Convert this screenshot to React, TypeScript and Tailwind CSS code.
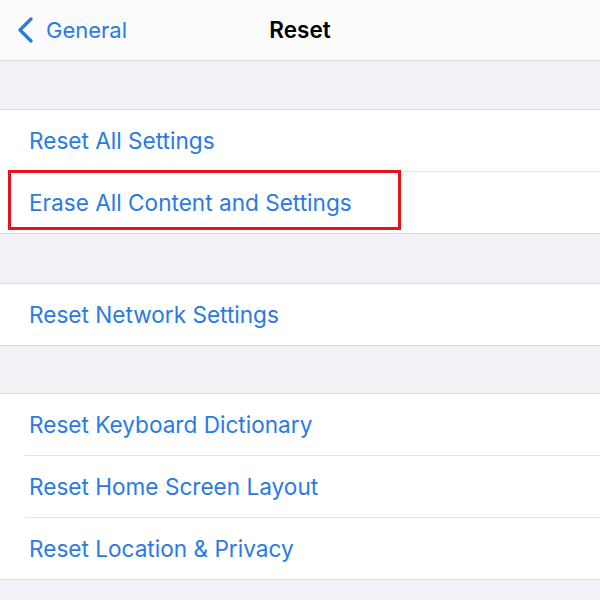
import React from 'react';

const groups: { label: string; highlight?: boolean }[][] = [
  [{ label: 'Reset All Settings' }, { label: 'Erase All Content and Settings', highlight: true }],
  [{ label: 'Reset Network Settings' }],
  [
    { label: 'Reset Keyboard Dictionary' },
    { label: 'Reset Home Screen Layout' },
    { label: 'Reset Location & Privacy' },
  ],
];

const gaps = ['mt-[48px]', 'mt-[49px]', 'mt-[47px]'];

const Row: React.FC<{ label: string; last: boolean; highlight?: boolean }> = ({ label, last, highlight }) => (
  <>
    <div className="relative h-[61px] pl-[29px] pt-[2px] flex items-center">
      <span className="text-[22.6px] text-[#2a7ae2] leading-none">{label}</span>
      {highlight && (
        <div className="absolute left-[8px] top-[-2px] w-[393px] h-[60px] border-[3px] border-[#e5131b]" />
      )}
    </div>
    {!last && <div className="ml-[25px] h-px bg-[#e3e3e6]" />}
  </>
);

export default function App() {
  return (
    <div className="w-[600px] h-[600px] overflow-hidden bg-[#f2f2f6] font-['Inter',sans-serif]">
      <div className="h-[61px] bg-[#fbfbfb] border-b border-[#d9d9dc] flex items-center relative">
        <div className="flex items-center pl-[17px] gap-[12px]">
          <svg width="17" height="26" viewBox="0 0 17 26" fill="none">
            <path d="M14 2 L3 13 L14 24" stroke="#2a7ae2" strokeWidth="3.2" strokeLinecap="round" strokeLinejoin="round" />
          </svg>
          <span className="text-[22px] leading-none text-[#2a7ae2]">General</span>
        </div>
        <div className="absolute left-0 right-0 text-center text-[22.5px] font-semibold text-black leading-none pointer-events-none">
          Reset
        </div>
      </div>
      {groups.map((g, gi) => (
        <div key={gi} className={`${gaps[gi]} bg-white border-y border-[#dcdce0]`}>
          {g.map((r, ri) => (
            <Row key={r.label} label={r.label} last={ri === g.length - 1} highlight={r.highlight} />
          ))}
        </div>
      ))}
    </div>
  );
}
